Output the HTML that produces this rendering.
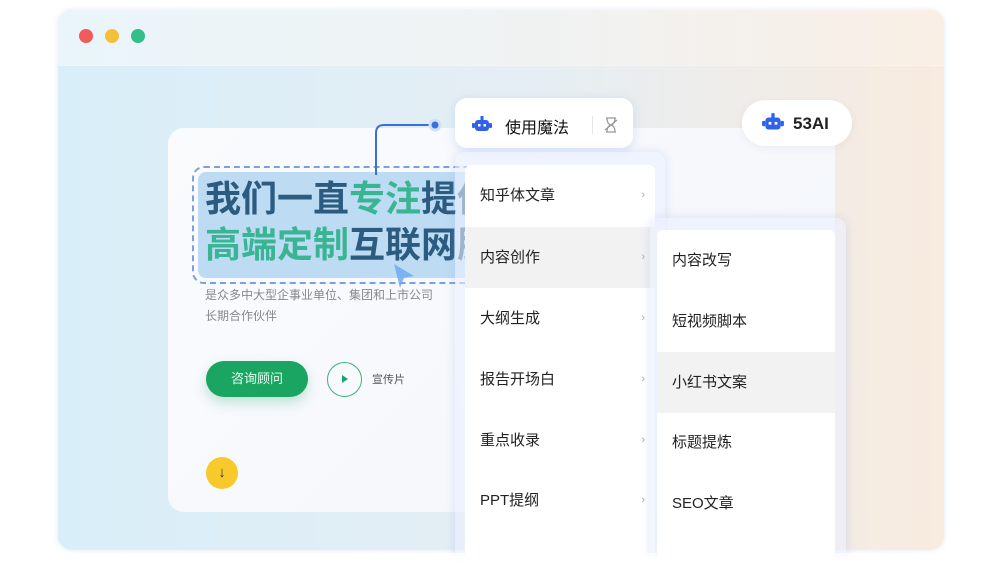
<!DOCTYPE html>
<html><head><meta charset="utf-8"><style>
*{margin:0;padding:0;box-sizing:border-box}
html,body{width:1000px;height:563px;overflow:hidden}
body{background:#fff;position:relative;font-family:"Liberation Sans","Noto Sans CJK SC",sans-serif}
.abs{position:absolute}
.win{left:58px;top:10px;width:886px;height:540px;border-radius:14px;overflow:hidden;background:linear-gradient(90deg,#d8eef9 0%,#e6eef3 55%,#f8ebdf 100%);box-shadow:0 0 6px rgba(180,200,220,.4)}
.bar{left:0;top:0;width:886px;height:56px;background:linear-gradient(90deg,#eaf5fb,#f1f2f1 60%,#faefe5);border-bottom:1px solid #f3f5f6}
.dot{width:14px;height:14px;border-radius:50%;top:19px}
.card{left:110px;top:118px;width:667px;height:384px;border-radius:16px;background:linear-gradient(135deg,#fafbfd,#f3f6fc)}
.item{position:absolute;left:0;width:100%;height:61px;font-size:15px;color:#222;line-height:61px;padding-left:15px}
.chev{position:absolute;right:10px;top:0;color:#aaa;font-size:11px}
</style></head><body>
<div class="abs win">
 <div class="abs bar"></div>
 <div class="abs dot" style="left:21px;background:#f25a5c"></div>
 <div class="abs dot" style="left:47px;background:#f6bf3a"></div>
 <div class="abs dot" style="left:73px;background:#33bf8a"></div>
 <div class="abs card"></div>
</div>
<div class="abs" style="left:192px;top:166px;width:290px;height:118px;border:2px dashed #7d9fe0;border-radius:12px"></div>
<div class="abs" style="left:198px;top:172px;width:280px;height:106px;background:#bddcf3;border-radius:8px"></div>
<div class="abs" style="left:205px;top:176px;font-size:36px;font-weight:bold;color:#2c5b80;white-space:nowrap;line-height:46px">我们一直<span style="color:#3ab593">专注</span>提供<br><span style="color:#3ab593">高端定制</span>互联网服务</div>
<svg class="abs" style="left:388px;top:262px" width="30" height="30"><path d="M6 2 L26 14 L16 16 L12 26 Z" fill="#6aa8f0" opacity=".8"/></svg>
<div class="abs" style="left:205px;top:285px;font-size:12px;color:#888;line-height:21px">是众多中大型企事业单位、集团和上市公司<br>长期合作伙伴</div>
<div class="abs" style="left:206px;top:361px;width:102px;height:36px;border-radius:18px;background:#1ba563;color:#e8fff2;font-size:13px;text-align:center;line-height:36px;box-shadow:0 6px 12px rgba(27,165,99,.25)">咨询顾问</div>
<div class="abs" style="left:327px;top:362px;width:35px;height:35px;border-radius:50%;border:1.5px solid #38b57a"></div>
<div class="abs" style="left:342px;top:375px;border-left:6px solid #1ba563;border-top:4.5px solid transparent;border-bottom:4.5px solid transparent"></div>
<div class="abs" style="left:372px;top:371px;font-size:11px;color:#555">宣传片</div>
<div class="abs" style="left:206px;top:457px;width:32px;height:32px;border-radius:50%;background:#f8c92b;text-align:center;line-height:31px;font-size:15px;color:#333">↓</div>
<svg class="abs" style="left:370px;top:115px" width="80" height="60"><path d="M6 60 V18 Q6 10 14 10 H65" fill="none" stroke="#3a6fe0" stroke-width="2"/><circle cx="65" cy="10" r="5" fill="#3a6fe0" stroke="#cfe0fb" stroke-width="3"/></svg>
<div class="abs" style="left:455px;top:98px;width:178px;height:50px;border-radius:12px;background:#fff;box-shadow:0 2px 10px rgba(150,180,230,.35)"></div>
<svg class="abs" style="left:471px;top:114px" width="22" height="22" viewBox="0 0 22 22"><rect x="4" y="6" width="14" height="11" rx="3" fill="#2f62e8"/><rect x="9.5" y="2" width="3" height="5" fill="#2f62e8"/><rect x="1" y="9" width="3" height="5" rx="1" fill="#2f62e8"/><rect x="18" y="9" width="3" height="5" rx="1" fill="#2f62e8"/><rect x="7" y="10" width="2.5" height="2.5" fill="#fff"/><rect x="12.5" y="10" width="2.5" height="2.5" fill="#fff"/></svg>
<div class="abs" style="left:505px;top:114px;font-size:16px;color:#111">使用魔法</div>
<div class="abs" style="left:592px;top:116px;width:1px;height:18px;background:#e5e5e5"></div>
<svg class="abs" style="left:603px;top:116px" width="16" height="18" viewBox="0 0 16 18"><path d="M3 2 H13 M3 16 H13 M4 2 Q4 8 8 9 Q12 10 12 16 M12 2 Q12 8 8 9 Q4 10 4 16 M2 14 L14 4" fill="none" stroke="#999" stroke-width="1.3"/></svg>
<div class="abs" style="left:742px;top:100px;width:110px;height:46px;border-radius:23px;background:#fff;box-shadow:0 2px 10px rgba(0,0,0,.05)"></div>
<svg class="abs" style="left:760px;top:111px" width="26" height="24" viewBox="0 0 22 22"><rect x="4" y="6" width="14" height="11" rx="3" fill="#2f62e8"/><rect x="9.5" y="2" width="3" height="5" fill="#2f62e8"/><rect x="1" y="9" width="3" height="5" rx="1" fill="#2f62e8"/><rect x="18" y="9" width="3" height="5" rx="1" fill="#2f62e8"/><rect x="7" y="10" width="2.5" height="2.5" fill="#fff"/><rect x="12.5" y="10" width="2.5" height="2.5" fill="#fff"/></svg>
<div class="abs" style="left:793px;top:114px;font-size:17px;font-weight:bold;color:#222">53AI</div>
<div class="abs" style="left:455px;top:152px;width:210px;height:411px;border-radius:10px 10px 0 0;background:rgba(235,240,255,.6);box-shadow:0 0 10px rgba(150,170,230,.3)"></div>
<div class="abs" style="left:465px;top:165px;width:190px;height:398px;background:#fff;border-radius:6px 6px 0 0">
 <div class="item" style="top:0">知乎体文章<span class="chev">›</span></div>
 <div class="item" style="top:62px;background:#f2f2f2">内容创作<span class="chev">›</span></div>
 <div class="item" style="top:123px">大纲生成<span class="chev">›</span></div>
 <div class="item" style="top:184px">报告开场白<span class="chev">›</span></div>
 <div class="item" style="top:245px">重点收录<span class="chev">›</span></div>
 <div class="item" style="top:305px">PPT提纲<span class="chev">›</span></div>
</div>
<div class="abs" style="left:650px;top:218px;width:196px;height:345px;border-radius:10px 10px 0 0;background:rgba(235,240,255,.6);box-shadow:0 0 10px rgba(150,170,230,.3)"></div>
<div class="abs" style="left:657px;top:230px;width:178px;height:333px;background:#fff;border-radius:6px 6px 0 0">
 <div class="item" style="top:0">内容改写</div>
 <div class="item" style="top:61px">短视频脚本</div>
 <div class="item" style="top:122px;background:#f2f2f2">小红书文案</div>
 <div class="item" style="top:182px">标题提炼</div>
 <div class="item" style="top:243px">SEO文章</div>
</div>
<div class="abs" style="left:0;top:553px;width:1000px;height:10px;background:linear-gradient(rgba(255,255,255,.6),#fff)"></div>
</body></html>
